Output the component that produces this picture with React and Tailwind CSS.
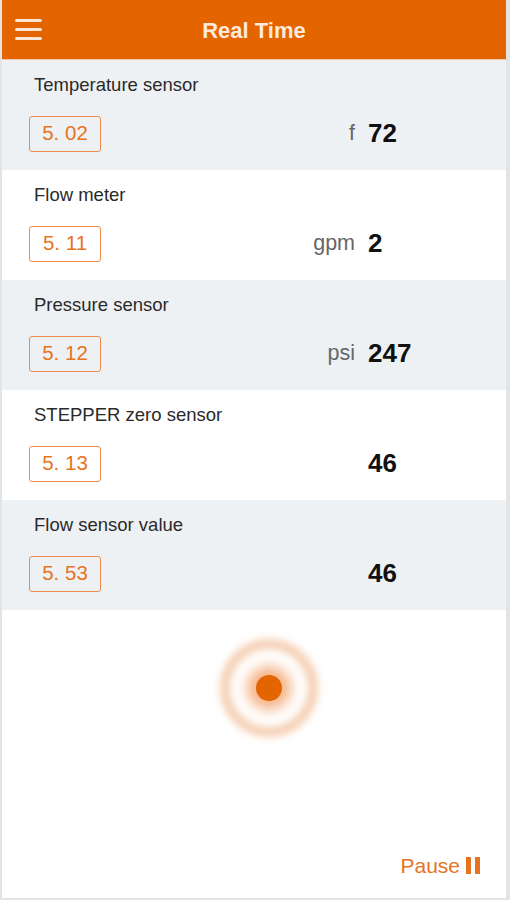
const sensors = [
  { name: 'Temperature sensor', code: '5. 02', unit: 'f', value: '72' },
  { name: 'Flow meter', code: '5. 11', unit: 'gpm', value: '2' },
  { name: 'Pressure sensor', code: '5. 12', unit: 'psi', value: '247' },
  { name: 'STEPPER zero sensor', code: '5. 13', unit: '', value: '46' },
  { name: 'Flow sensor value', code: '5. 53', unit: '', value: '46' },
];

const SensorRow = ({ sensor, shaded }) => (
  <div className={`h-[110px] pl-[27px] pt-[14px] ${shaded ? 'bg-[#eef1f4]' : 'bg-white'}`}>
    <p className="pl-[5px] text-[18.5px] leading-[22px] text-[#2a2a2a]">{sensor.name}</p>
    <div className="mt-[18px] flex items-center">
      <div className="flex h-[36px] w-[72px] items-center justify-center rounded-[3px] border-[1.5px] border-[#eb8c4c] text-[20.5px] text-[#e8731f]">
        {sensor.code}
      </div>
      <span className="w-[254px] text-right text-[21.5px] text-[#666]">{sensor.unit}</span>
      <span className="ml-[13px] text-[26px] font-bold text-[#111]">{sensor.value}</span>
    </div>
  </div>
);

const Pulse = () => (
  <svg width="120" height="120" viewBox="0 0 120 120">
    <defs>
      <filter id="blur-ring" x="-50%" y="-50%" width="200%" height="200%">
        <feGaussianBlur stdDeviation="4" />
      </filter>
      <filter id="blur-glow" x="-50%" y="-50%" width="200%" height="200%">
        <feGaussianBlur stdDeviation="6.5" />
      </filter>
    </defs>
    <circle cx="60" cy="60" r="44" fill="none" stroke="#f3c3a0" strokeWidth="8" filter="url(#blur-ring)" />
    <circle cx="60" cy="60" r="22" fill="#f5b285" filter="url(#blur-glow)" />
    <circle cx="60" cy="60" r="13" fill="#e46400" />
  </svg>
);

const App = () => {
  return (
    <div className="flex h-[900px] w-[510px] flex-col border-b-2 border-l-2 border-r-4 border-[#e4e4e4] bg-white font-['Liberation_Sans',Arial,sans-serif]">
      <header className="relative flex h-[59px] shrink-0 items-center justify-center bg-[#e46400]">
        <div className="absolute left-[13px] top-[19px] flex flex-col gap-[6px]">
          <span className="block h-[3px] w-[27px] rounded-full bg-[#fbe6d6]" />
          <span className="block h-[3px] w-[27px] rounded-full bg-[#fbe6d6]" />
          <span className="block h-[3px] w-[27px] rounded-full bg-[#fbe6d6]" />
        </div>
        <h1 className="pt-[2px] text-[22px] font-bold text-[#fde9da]">Real Time</h1>
      </header>
      <div className="h-px bg-[#f1c6a6]" />

      <div>
        {sensors.map((s, i) => (
          <SensorRow key={s.name} sensor={s} shaded={i % 2 === 0} />
        ))}
      </div>

      <div className="mt-[18px] flex justify-center pl-[30px]">
        <Pulse />
      </div>

      <div className="mt-auto mb-[17px] flex items-center justify-end pr-[26px]">
        <span className="text-[21px] text-[#e8731f]">Pause</span>
        <span className="ml-[6px] flex gap-[4px]">
          <span className="block h-[17px] w-[5px] bg-[#e8731f]" />
          <span className="block h-[17px] w-[5px] bg-[#e8731f]" />
        </span>
      </div>
    </div>
  );
};

export default App;
